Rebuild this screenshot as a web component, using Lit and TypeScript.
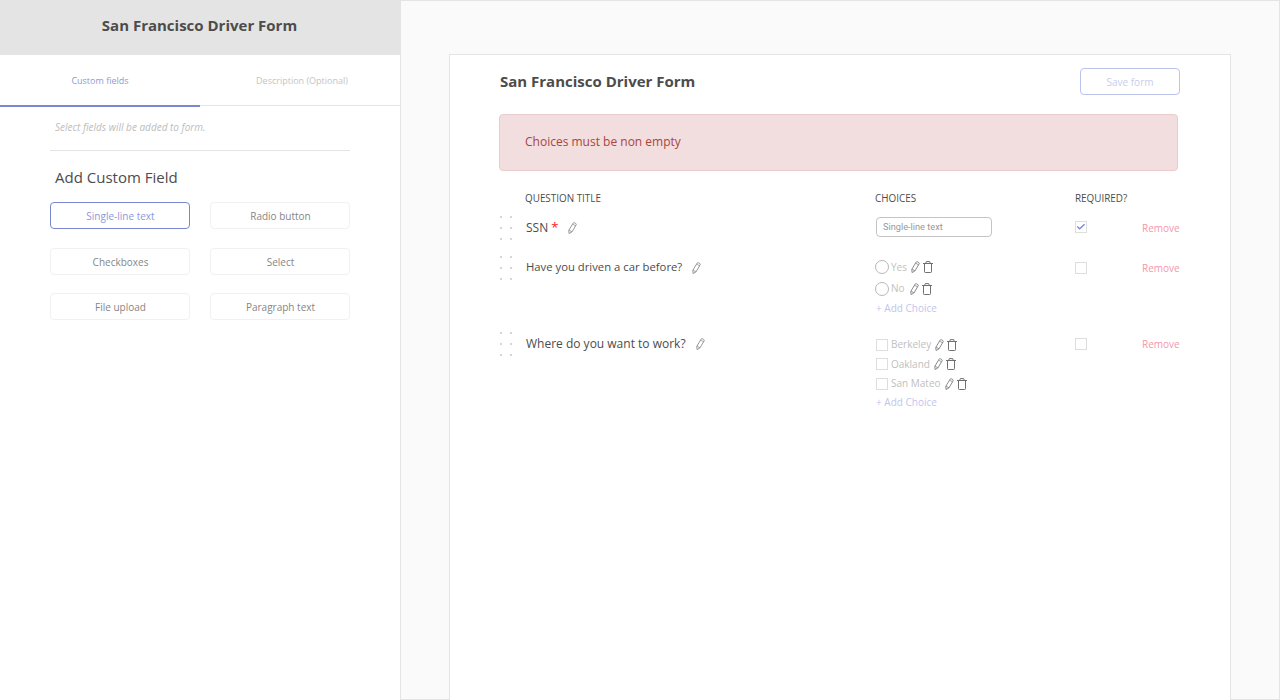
import { LitElement, html, css, svg } from "lit";
import { customElement } from "lit/decorators.js";
import { classMap } from "lit/directives/class-map.js";

const pencil = html`<svg class="pencil" width="9" height="12" viewBox="0 0 9 12" fill="none" stroke="currentColor" stroke-width="0.85" stroke-linejoin="round">
  <path d="M5.1 1.2Q5.6 0.3 6.5 0.8L7.8 1.5Q8.6 2 8.1 2.9L3.9 10 1 11.5 0.8 8.3Z" />
  <path d="M4.5 2.1 7.5 3.8M0.9 8.2Q2.2 7.9 2.2 9.1 3.4 8.8 3.9 10" stroke-width="0.7" />
</svg>`;

const trash = html`<svg class="trash" width="10" height="12" viewBox="0 0 10 12" fill="none" stroke="currentColor" stroke-width="1" stroke-linejoin="round">
  <path d="M0 2.5H10M2.7 2.4 3.3 0.6H6.7L7.3 2.4M1.5 2.7V10.7Q1.5 11.5 2.3 11.5H7.7Q8.5 11.5 8.5 10.7V2.7" />
</svg>`;

const handle = html`<svg class="handle" width="14" height="26" viewBox="0 0 14 26" fill="#d6d6d6">
  ${[1, 12, 23].map((y) => svg`<rect x="1" y=${y} width="2" height="2" /><rect x="11" y=${y} width="2" height="2" />`)}
</svg>`;

interface Choice { label: string; }
interface Question {
  title: string;
  kind: "text" | "radio" | "check";
  required: boolean;
  choices: Choice[];
}

@customElement("app-root")
export class AppRoot extends LitElement {
  static styles = css`
    :host { display: block; height: 700px; font-family: "Open Sans", sans-serif; color: #4c4c4c; background: #fff; }
    * { box-sizing: border-box; }
    svg { display: block; flex: none; }
    .page { display: flex; width: 1280px; height: 700px; overflow: hidden; }
    .side { width: 400px; flex: none; }
    .side-title { height: 55px; background: #e4e4e4; text-align: center; font-weight: 700; font-size: 15px; line-height: 51px; padding-right: 1px; }
    .tabs { display: flex; height: 52px; }
    .tab { width: 200px; height: 51px; border-bottom: 1px solid #e4e4e4; font-size: 9px; line-height: 52px; text-align: center; color: #c4c4c4; }
    .tab.second { padding-left: 4px; }
    .tab.active { height: 52px; border-bottom: 2px solid #7987d3; color: #8e97da; }
    .side-body { padding: 0 50px; }
    .hint { height: 44px; padding-left: 5px; border-bottom: 1px solid #e4e4e4; font-size: 10px; line-height: 41px; font-style: italic; color: #bdbdbd; }
    .subhead { padding-left: 5px; height: 51px; font-size: 15px; line-height: 53px; }
    .fields { display: grid; grid-template-columns: 140px 140px; column-gap: 20px; row-gap: 18.5px; }
    .field { height: 27px; border: 1px solid #f1f1f1; border-radius: 4px; text-align: center; font-size: 10px; line-height: 27px; padding-left: 1px; color: #868686; }
    .field.active { border-color: #7987d3; color: #8e97da; }

    .main { flex: 1; background: #fafafa; border: 1px solid #e4e4e4; padding: 53px 48px 0; height: 700px; }
    .sheet { width: 782px; height: 646px; background: #fff; border: 1px solid #e4e4e4; border-bottom: 0; padding: 13px 50px 0 49px; }
    .top { display: flex; justify-content: space-between; padding-left: 1px; height: 46px; }
    .form-title { font-weight: 700; font-size: 15px; line-height: 26px; }
    .save { width: 100px; height: 27px; border: 1px solid #bcc3ea; border-radius: 4px; color: #c8cdee; font-size: 10px; line-height: 27px; text-align: center; }
    .alert { width: 679px; height: 57px; border: 1px solid #ebccce; border-radius: 4px; background: #f2dede; color: #a94442; font-size: 12px; line-height: 54px; padding-left: 25px; }
    .row { display: grid; grid-template-columns: 27px 349px 200px 67px 1fr; }
    .head { height: 37px; font-size: 9.9px; line-height: 55px; }
    .head .h1 { grid-column: 2; margin-left: -1px; }
    .q { height: 40px; }
    .q.radio { height: 76px; }
    .q.check { height: 90px; }
    .handle { margin-top: 7px; }
    .question { display: flex; align-items: center; height: 39px; font-size: 12px; }
    .question span { padding-bottom: 1px; }
    .q.radio .question { font-size: 11.3px; }
    .q.radio .question span { padding-bottom: 3px; }
    .star { color: #f11; font-size: 13px; margin-left: 3px; }
    .question .pencil { margin-left: 10px; color: #858585; }
    .choices { padding: 9px 0 0 1px; }
    .input { width: 116px; height: 20px; border: 1px solid #c4c4c4; border-radius: 4px; font-family: Roboto, sans-serif; font-size: 9.2px; line-height: 18px; padding-left: 6px; color: #989898; }
    .choice { display: flex; align-items: center; height: 21.5px; font-size: 10px; color: #c0c0c0; }
    .radio .choices { padding: 8.5px 0 0; }
    .radio .add { padding-left: 1px; }
    .check .choices { padding: 11px 0 0 1px; }
    .check .choice { height: 19.5px; }
    .label { min-width: 15px; padding-bottom: 1px; }
    .choice .pencil { margin-left: 4px; color: #777; }
    .choice .trash { margin-left: 3px; color: #707070; }
    .ring { width: 14px; height: 14px; border: 1px solid #b8b8b8; border-radius: 50%; margin-right: 2px; }
    .box { width: 12px; height: 12px; border: 1px solid #dedede; margin-right: 3px; }
    .add { font-size: 10px; line-height: 17px; color: #bfc5ec; }
    .req { padding-top: 14px; }
    .text .req { padding-top: 13px; }
    .req .box { display: grid; place-items: center; }
    .remove { font-size: 10px; line-height: 40px; color: #f595ad; }
  `;

  fields = ["Single-line text", "Radio button", "Checkboxes", "Select", "File upload", "Paragraph text"];

  questions: Question[] = [
    { title: "SSN", kind: "text", required: true, choices: [] },
    { title: "Have you driven a car before?", kind: "radio", required: false, choices: [{ label: "Yes" }, { label: "No" }] },
    { title: "Where do you want to work?", kind: "check", required: false, choices: [{ label: "Berkeley" }, { label: "Oakland" }, { label: "San Mateo" }] },
  ];

  renderChoices(q: Question) {
    if (q.kind === "text") return html`<div class="input">Single-line text</div>`;
    return html`
      ${q.choices.map((c) => html`<div class="choice"><span class=${q.kind === "radio" ? "ring" : "box"}></span><span class="label">${c.label}</span>${pencil}${trash}</div>`)}
      <div class="add">+ Add Choice</div>`;
  }

  renderQuestion(q: Question) {
    return html`<div class=${classMap({ row: true, q: true, [q.kind]: true })}>
      ${handle}
      <div class="question"><span>${q.title}</span>${q.required ? html`<span class="star">*</span>` : null}${pencil}</div>
      <div class="choices">${this.renderChoices(q)}</div>
      <div class="req"><div class="box">${q.required
        ? html`<svg width="10" height="10" viewBox="0 0 10 10" fill="none" stroke="#7987d3" stroke-width="1.3"><path d="M1.2 4.6 3.7 6.8 8.6 2.2" /></svg>`
        : null}</div></div>
      <div class="remove">Remove</div>
    </div>`;
  }

  render() {
    return html`<div class="page">
      <aside class="side">
        <div class="side-title">San Francisco Driver Form</div>
        <div class="tabs"><div class="tab active">Custom fields</div><div class="tab second">Description (Optional)</div></div>
        <div class="side-body">
          <div class="hint">Select fields will be added to form.</div>
          <div class="subhead">Add Custom Field</div>
          <div class="fields">${this.fields.map((f, i) => html`<div class=${classMap({ field: true, active: i === 0 })}>${f}</div>`)}</div>
        </div>
      </aside>
      <main class="main">
        <div class="sheet">
          <div class="top"><div class="form-title">San Francisco Driver Form</div><div class="save">Save form</div></div>
          <div class="alert">Choices must be non empty</div>
          <div class="row head"><div class="h1">QUESTION TITLE</div><div class="h2">CHOICES</div><div class="h3">REQUIRED?</div></div>
          ${this.questions.map((q) => this.renderQuestion(q))}
        </div>
      </main>
    </div>`;
  }
}
